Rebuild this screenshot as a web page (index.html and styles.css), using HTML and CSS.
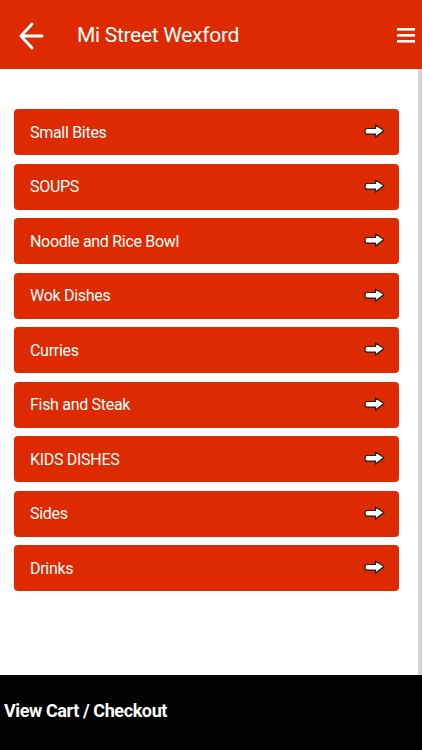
FILE: index.html
```html
<!DOCTYPE html>
<html>
<head>
<meta charset="utf-8">
<link rel="stylesheet" href="styles.css">
</head>
<body>
<div class="app">
  <header class="topbar">
    <svg class="back" width="26" height="32" viewBox="0 0 26 32">
      <path d="M3 16 H24 M14 4 L3 16 L14 28" fill="none" stroke="#fff" stroke-width="3" stroke-linecap="round" stroke-linejoin="round"/>
    </svg>
    <h1 class="title">Mi Street Wexford</h1>
    <svg class="menu" width="18" height="16" viewBox="0 0 18 16">
      <rect x="0" y="1" width="18" height="2.6" fill="#fff"/>
      <rect x="0" y="7" width="18" height="2.6" fill="#fff"/>
      <rect x="0" y="13" width="18" height="2.6" fill="#fff"/>
    </svg>
  </header>
  <main class="content">
    <ul class="cats">
      <li class="cat"><span>Small Bites</span><svg class="go" width="22" height="16" viewBox="0 0 22 16"><path d="M3 6.5 H11.5 V3 L20 8.5 L11.5 15 V12 H3 Q1 12 1 9.2 Q1 6.5 3 6.5 Z" fill="#5a1a10"/><path d="M3 5.5 H11.5 V2 L20 7.5 L11.5 14 V11 H3 Q1 11 1 8.2 Q1 5.5 3 5.5 Z" fill="#fff" stroke="#222" stroke-width="1.2" stroke-linejoin="round"/></svg></li>
      <li class="cat"><span>SOUPS</span><svg class="go" width="22" height="16" viewBox="0 0 22 16"><path d="M3 6.5 H11.5 V3 L20 8.5 L11.5 15 V12 H3 Q1 12 1 9.2 Q1 6.5 3 6.5 Z" fill="#5a1a10"/><path d="M3 5.5 H11.5 V2 L20 7.5 L11.5 14 V11 H3 Q1 11 1 8.2 Q1 5.5 3 5.5 Z" fill="#fff" stroke="#222" stroke-width="1.2" stroke-linejoin="round"/></svg></li>
      <li class="cat"><span>Noodle and Rice Bowl</span><svg class="go" width="22" height="16" viewBox="0 0 22 16"><path d="M3 6.5 H11.5 V3 L20 8.5 L11.5 15 V12 H3 Q1 12 1 9.2 Q1 6.5 3 6.5 Z" fill="#5a1a10"/><path d="M3 5.5 H11.5 V2 L20 7.5 L11.5 14 V11 H3 Q1 11 1 8.2 Q1 5.5 3 5.5 Z" fill="#fff" stroke="#222" stroke-width="1.2" stroke-linejoin="round"/></svg></li>
      <li class="cat"><span>Wok Dishes</span><svg class="go" width="22" height="16" viewBox="0 0 22 16"><path d="M3 6.5 H11.5 V3 L20 8.5 L11.5 15 V12 H3 Q1 12 1 9.2 Q1 6.5 3 6.5 Z" fill="#5a1a10"/><path d="M3 5.5 H11.5 V2 L20 7.5 L11.5 14 V11 H3 Q1 11 1 8.2 Q1 5.5 3 5.5 Z" fill="#fff" stroke="#222" stroke-width="1.2" stroke-linejoin="round"/></svg></li>
      <li class="cat"><span>Curries</span><svg class="go" width="22" height="16" viewBox="0 0 22 16"><path d="M3 6.5 H11.5 V3 L20 8.5 L11.5 15 V12 H3 Q1 12 1 9.2 Q1 6.5 3 6.5 Z" fill="#5a1a10"/><path d="M3 5.5 H11.5 V2 L20 7.5 L11.5 14 V11 H3 Q1 11 1 8.2 Q1 5.5 3 5.5 Z" fill="#fff" stroke="#222" stroke-width="1.2" stroke-linejoin="round"/></svg></li>
      <li class="cat"><span>Fish and Steak</span><svg class="go" width="22" height="16" viewBox="0 0 22 16"><path d="M3 6.5 H11.5 V3 L20 8.5 L11.5 15 V12 H3 Q1 12 1 9.2 Q1 6.5 3 6.5 Z" fill="#5a1a10"/><path d="M3 5.5 H11.5 V2 L20 7.5 L11.5 14 V11 H3 Q1 11 1 8.2 Q1 5.5 3 5.5 Z" fill="#fff" stroke="#222" stroke-width="1.2" stroke-linejoin="round"/></svg></li>
      <li class="cat"><span>KIDS DISHES</span><svg class="go" width="22" height="16" viewBox="0 0 22 16"><path d="M3 6.5 H11.5 V3 L20 8.5 L11.5 15 V12 H3 Q1 12 1 9.2 Q1 6.5 3 6.5 Z" fill="#5a1a10"/><path d="M3 5.5 H11.5 V2 L20 7.5 L11.5 14 V11 H3 Q1 11 1 8.2 Q1 5.5 3 5.5 Z" fill="#fff" stroke="#222" stroke-width="1.2" stroke-linejoin="round"/></svg></li>
      <li class="cat"><span>Sides</span><svg class="go" width="22" height="16" viewBox="0 0 22 16"><path d="M3 6.5 H11.5 V3 L20 8.5 L11.5 15 V12 H3 Q1 12 1 9.2 Q1 6.5 3 6.5 Z" fill="#5a1a10"/><path d="M3 5.5 H11.5 V2 L20 7.5 L11.5 14 V11 H3 Q1 11 1 8.2 Q1 5.5 3 5.5 Z" fill="#fff" stroke="#222" stroke-width="1.2" stroke-linejoin="round"/></svg></li>
      <li class="cat"><span>Drinks</span><svg class="go" width="22" height="16" viewBox="0 0 22 16"><path d="M3 6.5 H11.5 V3 L20 8.5 L11.5 15 V12 H3 Q1 12 1 9.2 Q1 6.5 3 6.5 Z" fill="#5a1a10"/><path d="M3 5.5 H11.5 V2 L20 7.5 L11.5 14 V11 H3 Q1 11 1 8.2 Q1 5.5 3 5.5 Z" fill="#fff" stroke="#222" stroke-width="1.2" stroke-linejoin="round"/></svg></li>
    </ul>
  </main>
  <footer class="cartbar">View Cart / Checkout</footer>
</div>
</body>
</html>
```

FILE: styles.css
```css
html, body {
  margin: 0;
  padding: 0;
  background: #fff;
}
.app {
  width: 422px;
  height: 750px;
  display: flex;
  flex-direction: column;
  font-family: Roboto, "Liberation Sans", sans-serif;
}
.topbar {
  height: 69px;
  flex: 0 0 69px;
  background: #dd2a00;
  display: flex;
  align-items: center;
  padding: 0 7px 0 18px;
  box-sizing: border-box;
}
.back {
  display: block;
  margin-top: 2px;
}
.title {
  margin: 0 0 0 33px;
  flex: 1;
  color: #fff;
  font-weight: 400;
  font-size: 21px;
  letter-spacing: -0.3px;
}
.menu {
  display: block;
  margin-top: 1px;
}
.content {
  flex: 1;
  border-right: 4px solid #d4d4d4;
  padding: 40px 19px 0 14px;
}
.cats {
  list-style: none;
  margin: 0;
  padding: 0;
  display: flex;
  flex-direction: column;
  gap: 8.5px;
}
.cat {
  height: 46px;
  background: #dd2a00;
  border-radius: 4px;
  display: flex;
  align-items: center;
  justify-content: space-between;
  padding: 0 13px 0 16px;
  color: #fff;
  font-size: 16px;
  letter-spacing: -0.3px;
}
.go {
  display: block;
  margin-top: -2px;
}
.cartbar {
  height: 75px;
  flex: 0 0 75px;
  box-sizing: border-box;
  background: #000;
  color: #fff;
  font-weight: 700;
  font-size: 18px;
  letter-spacing: -0.4px;
  display: flex;
  align-items: center;
  padding: 0 0 4px 4px;
}
```
